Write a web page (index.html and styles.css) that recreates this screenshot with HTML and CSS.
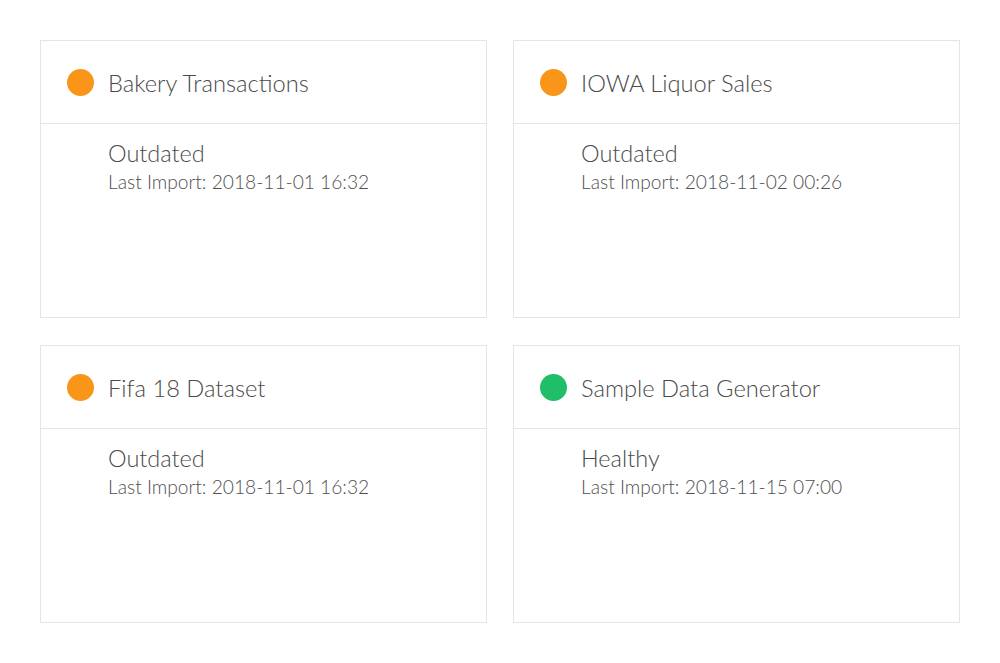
FILE: index.html
```html
<!DOCTYPE html>
<html>
<head>
<meta charset="utf-8">
<link rel="stylesheet" href="styles.css">
</head>
<body>
<div class="grid">
  <div class="card">
    <div class="card-head"><span class="dot dot-orange"></span><span class="title">Bakery Transactions</span></div>
    <div class="card-body"><div class="status">Outdated</div><div class="meta">Last Import: 2018-11-01 16:32</div></div>
  </div>
  <div class="card">
    <div class="card-head"><span class="dot dot-orange"></span><span class="title">IOWA Liquor Sales</span></div>
    <div class="card-body"><div class="status">Outdated</div><div class="meta">Last Import: 2018-11-02 00:26</div></div>
  </div>
  <div class="card">
    <div class="card-head"><span class="dot dot-orange"></span><span class="title">Fifa 18 Dataset</span></div>
    <div class="card-body"><div class="status">Outdated</div><div class="meta">Last Import: 2018-11-01 16:32</div></div>
  </div>
  <div class="card">
    <div class="card-head"><span class="dot dot-green"></span><span class="title">Sample Data Generator</span></div>
    <div class="card-body"><div class="status">Healthy</div><div class="meta">Last Import: 2018-11-15 07:00</div></div>
  </div>
</div>
</body>
</html>
```
FILE: styles.css
```css
html, body {
  margin: 0;
  padding: 0;
  background: #ffffff;
}
body {
  font-family: Lato, "Open Sans", sans-serif;
  font-weight: 300;
  color: #4d4d4d;
}
.grid {
  display: grid;
  grid-template-columns: 447px 447px;
  grid-auto-rows: 278px;
  column-gap: 26px;
  row-gap: 27px;
  padding: 40px 0 0 40px;
}
.card {
  border: 1px solid #e5e5e5;
  box-sizing: border-box;
  display: flex;
  flex-direction: column;
}
.card-head {
  height: 83px;
  border-bottom: 1px solid #e5e5e5;
  display: flex;
  align-items: center;
  padding-left: 26px;
  box-sizing: border-box;
}
.dot {
  width: 27px;
  height: 27px;
  border-radius: 50%;
  flex: none;
  margin-right: 14px;
}
.dot-orange { background: #f99619; }
.dot-green { background: #21be6a; }
.title {
  font-size: 23.7px;
  color: #4a4a4a;
  margin-top: 2px;
}
.card-body {
  padding: 15px 0 0 67px;
}
.status {
  font-size: 23.5px;
  line-height: 28px;
  color: #4a4a4a;
}
.meta {
  font-size: 19.2px;
  line-height: 24px;
  margin-top: 3px;
  color: #505050;
}
```
